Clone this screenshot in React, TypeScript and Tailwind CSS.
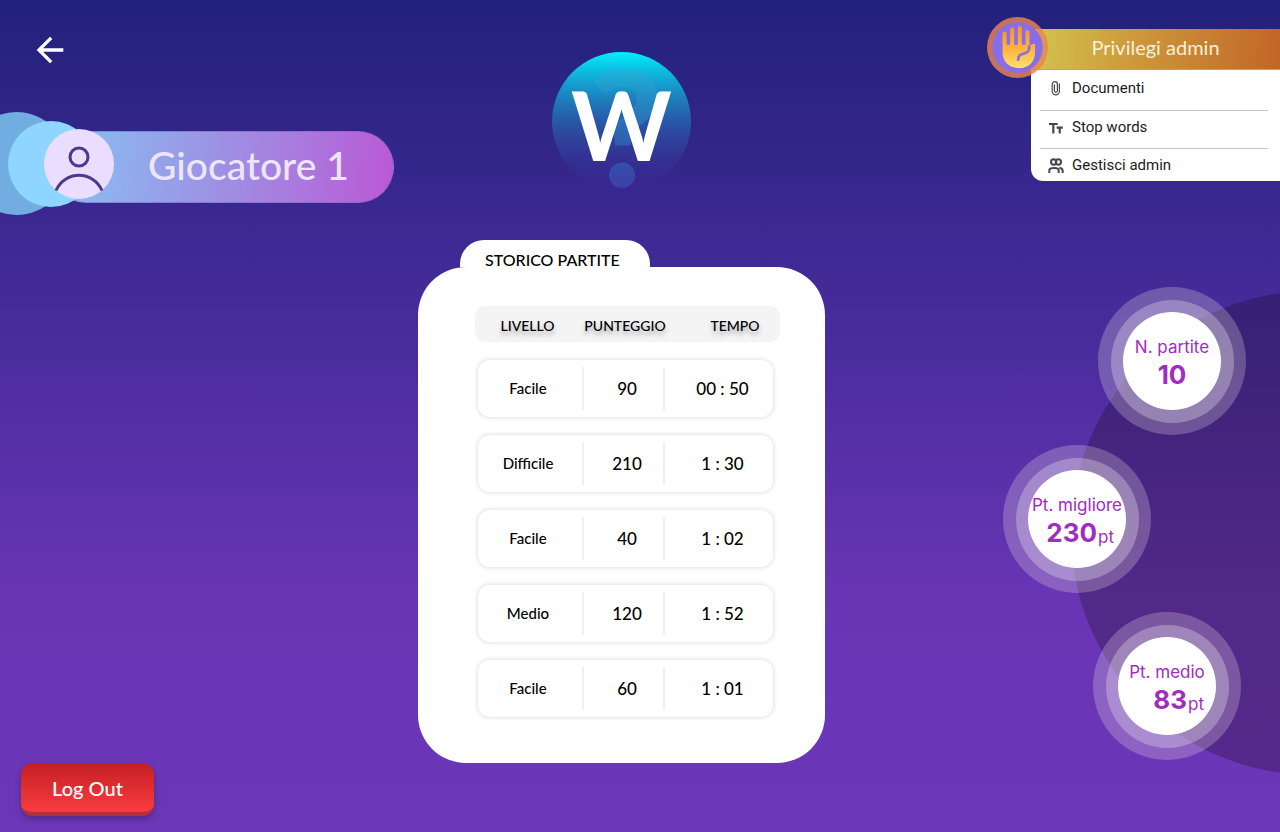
import React from "react";
import { MdArrowBack } from "react-icons/md";

const games = [
  { level: "Facile", score: "90", time: "00 : 50" },
  { level: "Difficile", score: "210", time: "1 : 30" },
  { level: "Facile", score: "40", time: "1 : 02" },
  { level: "Medio", score: "120", time: "1 : 52" },
  { level: "Facile", score: "60", time: "1 : 01" },
];

function ClipIcon() {
  return (
    <svg viewBox="0 0 16 16" className="size-4" fill="none" stroke="#49454f" strokeWidth="1.2" aria-hidden="true">
      <path d="M11.4 3.6v7.6a3.6 3.6 0 0 1-7.2 0V4.2a2.6 2.6 0 0 1 5.2 0v6.6a1.5 1.5 0 0 1-3 0V4.4" />
    </svg>
  );
}

function TextSizeIcon() {
  return (
    <svg viewBox="0 0 16 16" className="size-4" fill="none" stroke="#49454f" strokeWidth="2.2" aria-hidden="true">
      <path d="M1 4h8.6M5.3 4v9.4M8.6 7.6h6.2M11.7 7.6v5.8" />
    </svg>
  );
}

function GroupIcon() {
  return (
    <svg viewBox="0 0 48 45" className="h-[15px] w-4" fill="none" stroke="#49454f" strokeWidth="6" aria-hidden="true">
      <circle cx="17" cy="12" r="8" />
      <circle cx="31" cy="12" r="8" />
      <path d="M4 45V37c0-5 6-7 14-7s14 2 14 7v8" />
      <path d="M34 29c7 1 10 4 10 9v7" />
    </svg>
  );
}

function HandBadge() {
  return (
    <svg viewBox="0 0 184 184" className="absolute -left-11 -top-3 size-[61px]" aria-hidden="true">
      <defs>
        <linearGradient id="hand" x1="0" y1="0" x2="0" y2="1">
          <stop offset="0" stopColor="#ff9418" />
          <stop offset="0.55" stopColor="#ffb53c" />
          <stop offset="1" stopColor="#ffe070" />
        </linearGradient>
      </defs>
      <circle cx="92" cy="92" r="92" fill="#e88552" fillOpacity="0.82" />
      <circle cx="92" cy="92" r="76" fill="#896cea" />
      <path
        fill="url(#hand)"
        d="M47 50a6 6 0 0 1 12 0v34h11V38a6 6 0 0 1 12 0v46h11V33a6 6 0 0 1 12 0v51h11V45a6 6 0 0 1 12 0v44c4-6 10-8 17-8v22c0 34-20 51-49 51s-49-19-49-46z"
      />
      <path
        d="M94 132v-4c0-12 7-16 17-18 12-2 16-6 16-18v-6"
        fill="none"
        stroke="#896cea"
        strokeWidth="8"
      />
    </svg>
  );
}

function Logo() {
  return (
    <svg viewBox="0 0 139 139" className="size-[139px] overflow-visible" role="img" aria-label="W">
      <defs>
        <linearGradient id="disc" x1="0" y1="0" x2="0" y2="1">
          <stop offset="0" stopColor="#00f0ff" />
          <stop offset="1" stopColor="#3d2894" stopOpacity="0" />
        </linearGradient>
        <linearGradient id="mark" x1="0" y1="0" x2="0" y2="1">
          <stop offset="0" stopColor="#36bcd6" stopOpacity="0.35" />
          <stop offset="0.5" stopColor="#2c8fc8" stopOpacity="0.45" />
          <stop offset="1" stopColor="#4a2fb0" stopOpacity="0.7" />
        </linearGradient>
      </defs>
      <circle cx="69.5" cy="69.5" r="69.5" fill="url(#disc)" />
      <text x="74" y="135" textAnchor="middle" className="font-['Lato'] text-[160px] font-black" fill="url(#mark)">
        ?
      </text>
      <text x="69.5" y="109" textAnchor="middle" className="font-['Lato'] text-[96px] font-bold" fill="#fff">
        W
      </text>
    </svg>
  );
}

function Stat({ label, value, unit, place }: { label: string; value: string; unit?: string; place: string }) {
  return (
    <div className={`flex size-[148px] items-center justify-center rounded-full bg-[#f5e6e6]/25 ${place}`}>
      <div className="flex size-[123px] items-center justify-center rounded-full bg-[#f5f0f5]/30">
        <div className="flex size-[98px] flex-col items-center justify-center whitespace-nowrap rounded-full bg-white pt-1 text-[#a22cbf]">
          <span className="text-[17px] leading-6">{label}</span>
          {unit ? (
            <span className="flex items-end gap-px self-end pr-3 text-[26px] font-bold leading-8">
              {value}
              <span className="text-[17px] font-normal leading-6">{unit}</span>
            </span>
          ) : (
            <span className="text-[26px] font-bold leading-8">{value}</span>
          )}
        </div>
      </div>
    </div>
  );
}

export default function App() {
  return (
    <main className="relative grid min-h-screen grid-cols-[418fr_407px_455fr] overflow-hidden bg-[linear-gradient(#22217b_0%,#3e2994_30%,#6935b5_72%,#6b36b7_100%)] font-['Lato',sans-serif]">
      <div className="absolute -right-[275px] top-[291px] size-[484px] rounded-full bg-[#100408]/25" />

      <section className="flex flex-col items-start">
        <button type="button" aria-label="Indietro" className="ml-[30px] mt-[30px] text-white">
          <MdArrowBack className="size-10" />
        </button>
        <div className="relative mt-[61px]">
          <div className="absolute -left-[35px] -top-[19px] size-[103px] rounded-full bg-[#72ade2]" />
          <div className="ml-[50px] flex h-[72px] w-[344px] items-center rounded-full border border-[#8a5fc6]/60 bg-[linear-gradient(97deg,#87c4f4_0%,#9a97e6_43%,#aa79de_72%,#bb58d5_100%)] pb-1 pl-[97px]">
            <h1 className="text-[39px] font-medium leading-none text-[#ede6fa]">Giocatore 1</h1>
          </div>
          <div className="absolute -top-[10px] left-2 size-[86px] rounded-full bg-[#8ed6ff]" />
          <svg viewBox="0 0 70 70" className="absolute -top-[2px] left-11 size-[70px]" aria-hidden="true">
            <circle cx="35" cy="35" r="35" fill="#eaddff" />
            <g fill="none" stroke="#4f378b" strokeWidth="3">
              <circle cx="35" cy="28" r="9" />
              <path d="M12 61.5a25 25 0 0 1 46 0" />
            </g>
          </svg>
        </div>
        <button
          type="button"
          className="mb-4 ml-[21px] mt-auto h-[53px] w-[133px] rounded-xl border-b-4 border-[#b92f38] bg-[linear-gradient(#c31f23,#fb3c40)] text-xl font-medium text-white shadow-[0_3px_6px_rgba(0,0,0,0.25)]"
        >
          Log Out
        </button>
      </section>

      <section className="flex flex-col pb-[69px] pt-[52px]">
        <div className="flex justify-center">
          <Logo />
        </div>
        <h2 className="relative ml-[42px] mt-[49px] h-[27px] w-[190px] rounded-t-3xl bg-white pl-[25px] pt-2 text-base font-medium">
          STORICO PARTITE
        </h2>
        <div className="rounded-[48px] bg-white pb-[46px] pl-[57px] pt-[39px]">
          <table className="block w-[305px]">
            <thead className="block">
              <tr className="grid h-9 grid-cols-[105px_90px_110px] items-center rounded-[10px] bg-[#f4f4f4] pt-1 text-sm [text-shadow:0_4px_4px_rgba(0,0,0,0.3)]">
                <th className="font-medium">LIVELLO</th>
                <th className="font-medium">PUNTEGGIO</th>
                <th className="pl-5 font-medium">TEMPO</th>
              </tr>
            </thead>
            <tbody className="block">
              {games.map((g, i) => (
                <tr
                  key={i}
                  className="ml-[3px] mt-[18px] grid h-[57px] w-[295px] grid-cols-[104px_81px_110px] items-center rounded-xl text-center font-medium shadow-[0_0_4px_1px_rgba(0,0,0,0.12)]"
                >
                  <td className="pr-1 text-[15px]">{g.level}</td>
                  <td className="h-[43px] border-l-2 border-[#f0f0f0] pl-[7px] text-[17px] leading-[43px]">{g.score}</td>
                  <td className="h-[43px] border-l-2 border-[#f0f0f0] pl-[7px] text-[17px] leading-[43px]">{g.time}</td>
                </tr>
              ))}
            </tbody>
          </table>
        </div>
      </section>

      <section className="flex flex-col items-end pt-[29px]">
        <nav className="relative w-[249px]">
          <div className="flex h-[41px] items-center justify-center border-b border-[#e9963c] bg-[linear-gradient(97deg,#d2c54e_0%,#cd9a3c_40%,#c26526_100%)] pb-1 text-xl text-[#f8f0da]">
            Privilegi admin
          </div>
          <ul className="rounded-bl-xl bg-white pl-[9px] pr-3 font-['Roboto',sans-serif] text-[15px] text-[#1d1b20]">
            <li className="border-b border-[#cac4d0]">
              <a href="#documenti" className="flex h-10 items-center gap-2 pb-1 pl-2">
                <ClipIcon />
                Documenti
              </a>
            </li>
            <li className="border-b border-[#cac4d0]">
              <a href="#stop-words" className="flex h-[37px] items-center gap-2 pb-1 pl-2">
                <TextSizeIcon />
                Stop words
              </a>
            </li>
            <li>
              <a href="#gestisci-admin" className="flex h-8 items-center gap-2 pl-2">
                <GroupIcon />
                Gestisci admin
              </a>
            </li>
          </ul>
          <HandBadge />
        </nav>
        <div className="relative mt-[106px] flex flex-col items-end font-['Inter',sans-serif]">
          <Stat label="N. partite" value="10" place="mr-[34px]" />
          <Stat label="Pt. migliore" value="230" unit="pt" place="mr-[129px] mt-[10px]" />
          <Stat label="Pt. medio" value="83" unit="pt" place="mr-[39px] mt-[19px]" />
        </div>
      </section>
    </main>
  );
}
